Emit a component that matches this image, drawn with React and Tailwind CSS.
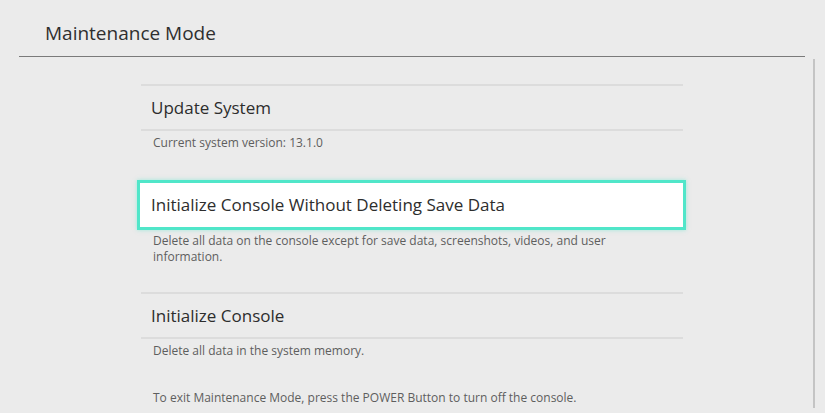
import React from "react";

const font = { fontFamily: '"Open Sans", "Noto Sans", sans-serif' };

const Divider = () => <div className="h-[2px] bg-[#dcdcdc]" />;

const App = () => {
  return (
    <div
      className="w-[825px] h-[413px] overflow-hidden bg-[#ebebeb] text-[#2d2d2d]"
      style={font}
    >
      {/* header */}
      <div className="h-[56px] pl-[45px] pt-[20px]">
        <h1 className="text-[19px] leading-[26px] text-[#2f2f2f]">Maintenance Mode</h1>
      </div>
      <div className="ml-[19px] w-[786px] h-px bg-[#7a7a7a]" />

      <div className="flex">
        {/* menu column */}
        <div className="ml-[141px] w-[542px] pt-[27px]">
          <Divider />
          <div className="h-[43px] flex items-center pl-[10px] text-[17px]">Update System</div>
          <Divider />
          <div className="h-[49px] pl-[12px] pt-[4px] text-[12px] leading-[16px] text-[#5e5e5e]">
            Current system version: 13.1.0
          </div>

          <div className="-ml-[4px] -mr-[3px] h-[50px] border-[3px] border-[#50e6c9] bg-white flex items-center pl-[11px] text-[17px] shadow-[0_0_4px_rgba(80,230,201,0.5)]">
            Initialize Console Without Deleting Save Data
          </div>
          <div className="h-[62px] pl-[12px] pt-[3px] text-[12px] leading-[16px] text-[#5e5e5e]">
            <p className="w-[465px]">
              Delete all data on the console except for save data, screenshots, videos, and user
              information.
            </p>
          </div>

          <Divider />
          <div className="h-[43px] flex items-center pl-[10px] text-[17px]">Initialize Console</div>
          <Divider />
          <div className="pl-[12px] pt-[4px] text-[12px] leading-[16px] text-[#5e5e5e]">
            Delete all data in the system memory.
          </div>
          <div className="pl-[12px] pt-[31px] text-[12px] leading-[16px] text-[#5e5e5e]">
            To exit Maintenance Mode, press the POWER Button to turn off the console.
          </div>
        </div>

        {/* scrollbar */}
        <div className="ml-[130px] mt-[2px] w-[2px] h-[349px] bg-[#c4c4c4]" />
      </div>
    </div>
  );
};

export default App;
